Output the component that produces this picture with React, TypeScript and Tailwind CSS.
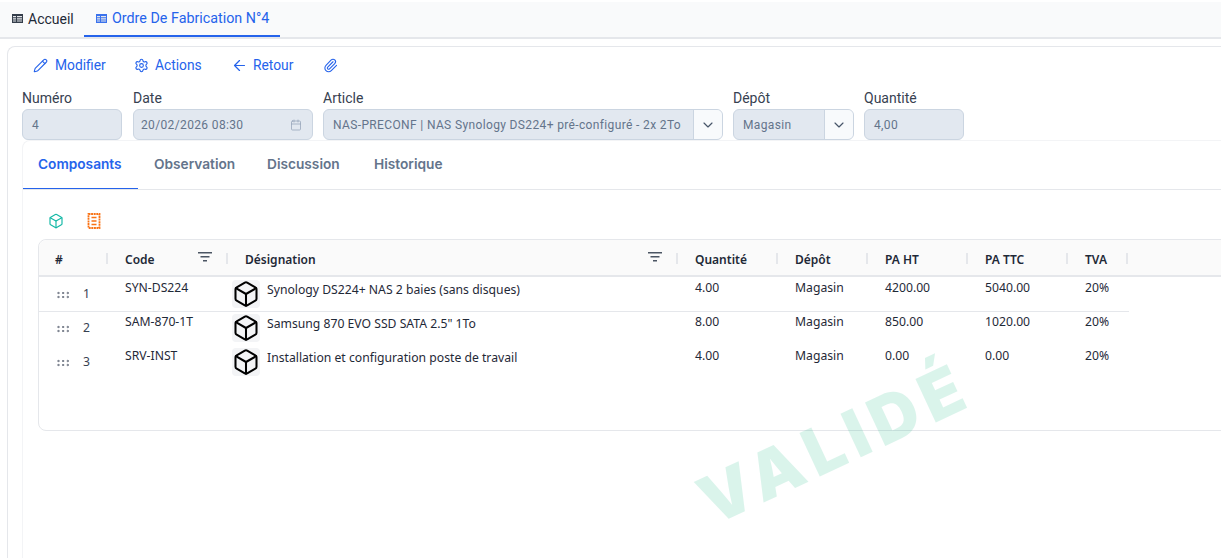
import { ArrowLeft, Box, Calendar, ChevronDown, GripHorizontal, Paperclip, Pencil, Settings } from "lucide-react";

const rows = [
  { n: 1, code: "SYN-DS224", name: "Synology DS224+ NAS 2 baies (sans disques)", qty: "4.00", ht: "4200.00", ttc: "5040.00" },
  { n: 2, code: "SAM-870-1T", name: 'Samsung 870 EVO SSD SATA 2.5" 1To', qty: "8.00", ht: "850.00", ttc: "1020.00" },
  { n: 3, code: "SRV-INST", name: "Installation et configuration poste de travail", qty: "4.00", ht: "0.00", ttc: "0.00" },
];

const inputClass = "h-[31px] flex items-center rounded-md border border-[#cbd5e1] bg-[#e2e8f0] text-xs text-[#64748b] tracking-[0.03em]";

function TableIcon({ className }: { className: string }) {
  return (
    <svg viewBox="0 0 11 9" width="11" height="9" className={className} fill="currentColor">
      <path d="M0 0h11v9H0z" opacity="0.9" />
      <path d="M1 2h3v1.2H1zM5 2h5v1.2H5zM1 4.2h3v1.2H1zM5 4.2h5v1.2H5zM1 6.4h3v1.2H1zM5 6.4h5v1.2H5z" fill="#e5e7eb" />
    </svg>
  );
}

function FilterIcon() {
  return (
    <svg viewBox="0 0 14 10" width="14" height="10" fill="#4b5563">
      <path d="M0 0h14v1.5H0zM2.5 4h9v1.5h-9zM5 8h4v1.5H5z" />
    </svg>
  );
}

function ReceiptIcon() {
  return (
    <svg viewBox="0 0 14 16" width="14" height="16" fill="none" stroke="#f97316" strokeWidth="1.4">
      <path d="M1.5 1h11v14h-11z" strokeDasharray="2 0.6" strokeWidth="1.8" />
      <path d="M4.5 4.5h5M4.5 8h5M4.5 11.5h5" />
    </svg>
  );
}

function HeaderCell({ label, filter }: { label: string; filter?: boolean }) {
  return (
    <div className="relative flex items-center justify-between pl-[17px] pr-4 pt-1 first:pl-4">
      <span>{label}</span>
      {filter && <span className="mb-1.5"><FilterIcon /></span>}
      <span className="absolute right-0 top-[13px] h-[11px] w-0.5 bg-[#e5e7eb]" />
    </div>
  );
}

function Field({ label, width, children }: { label: string; width: string; children: React.ReactNode }) {
  return (
    <div className={width}>
      <div className="h-[23px] pt-px text-sm leading-[23px] text-[#374151]">{label}</div>
      {children}
    </div>
  );
}

function SelectField({ value, padding }: { value: string; padding: string }) {
  return (
    <div className={`${inputClass} overflow-hidden`}>
      <span className={`flex-1 truncate ${padding}`}>{value}</span>
      <span className="flex h-full w-[29px] items-center justify-center border-l border-[#cbd5e1] bg-[#f8fafc] text-[#475569]">
        <ChevronDown size={16} strokeWidth={1.75} />
      </span>
    </div>
  );
}

export default function App() {
  return (
    <div className="relative flex h-[558px] w-[1221px] flex-col overflow-hidden bg-white text-[#1f2937]" style={{ fontFamily: "Roboto, sans-serif" }}>
      {/* Onglets du haut */}
      <div className="mt-0.5 flex h-[37px] items-end border-b-2 border-[#e5e7eb] bg-[#f9fafb] pl-3">
        <div className="flex h-[35px] w-[72px] items-center gap-[5px] pb-0.5 text-sm text-[#1f2937]">
          <TableIcon className="text-[#1f2937]" />
          Accueil
        </div>
        <div className="flex h-[35px] w-[196px] items-center gap-[5px] border-b-2 border-[#2563eb] pl-3 text-[14.3px] text-[#2563eb]">
          <TableIcon className="text-[#2563eb]" />
          Ordre De Fabrication N°4
        </div>
      </div>

      {/* Fiche */}
      <div className="ml-[7px] mt-[7px] flex-1 rounded-tl-lg border-l border-t border-[#e5e7eb] pl-[14px]">
        <div className="flex h-[36px] items-center pl-[11px] text-[13.8px] text-[#2563eb]">
          <span className="flex w-[101px] items-center gap-[7px]"><Pencil size={15} strokeWidth={1.75} />Modifier</span>
          <span className="flex w-[97px] items-center gap-1.5"><Settings size={15} strokeWidth={1.75} />Actions</span>
          <span className="flex w-[92px] items-center gap-[5px]"><ArrowLeft size={17} strokeWidth={1.75} />Retour</span>
          <Paperclip size={15} strokeWidth={1.75} />
        </div>

        <div className="flex gap-[10px] pt-[3px]">
          <Field label="Numéro" width="w-[100px]">
            <div className={`${inputClass} pl-[9px]`}>4</div>
          </Field>
          <Field label="Date" width="ml-px w-[180px]">
            <div className={`${inputClass} justify-between pl-[7px] pr-[10px]`}>
              20/02/2026 08:30
              <Calendar size={12} strokeWidth={1.5} className="text-[#94a3b8]" />
            </div>
          </Field>
          <Field label="Article" width="w-[400px]">
            <SelectField value="NAS-PRECONF | NAS Synology DS224+ pré-configuré - 2x 2To" padding="pl-[9px]" />
          </Field>
          <Field label="Dépôt" width="w-[121px]">
            <SelectField value="Magasin" padding="pl-[9px]" />
          </Field>
          <Field label="Quantité" width="w-[100px]">
            <div className={`${inputClass} pl-[9px]`}>4,00</div>
          </Field>
        </div>

        {/* Panneau des onglets */}
        <div className="h-[418px] rounded-tl-lg border-l border-t border-[#f3f4f6]">
          <div className="flex h-[49px] border-b border-[#e5e7eb] text-[13.7px] font-semibold text-[#64748b]" style={{ fontFamily: "Inter, sans-serif" }}>
            <div className="flex w-[115px] items-center border-b border-[#2563eb] pl-[15px] text-[#2563eb]">Composants</div>
            <div className="flex w-[113px] items-center pb-0.5 pl-4">Observation</div>
            <div className="flex w-[107px] items-center pb-0.5 pl-4">Discussion</div>
            <div className="flex items-center pb-0.5 pl-4">Historique</div>
          </div>

          <div className="flex h-[49px] items-start gap-[23px] pl-[25px] pt-[23px]">
            <Box size={16} strokeWidth={1.75} className="text-[#14b8a6]" />
            <ReceiptIcon />
          </div>

          {/* Tableau */}
          <div className="ml-[15px] h-[192px] w-[1300px] rounded-lg border border-[#e5e7eb] text-[12.2px]" style={{ fontFamily: '"Noto Sans", sans-serif' }}>
            <div className="h-[37px] rounded-t-lg border-b-2 border-[#e5e7eb] bg-[#fafafa] text-xs font-semibold text-[#1f2937]">
              <div className="grid h-full w-[1089px] grid-cols-[69px_120px_450px_100px_90px_100px_100px_60px]">
                <HeaderCell label="#" />
                <HeaderCell label="Code" filter />
                <HeaderCell label="Désignation" filter />
                <HeaderCell label="Quantité" />
                <HeaderCell label="Dépôt" />
                <HeaderCell label="PA HT" />
                <HeaderCell label="PA TTC" />
                <HeaderCell label="TVA" />
              </div>
            </div>
            {rows.map((r) => (
              <div
                key={r.n}
                className={`grid h-[34px] w-[1090px] grid-cols-[69px_120px_450px_100px_90px_100px_100px_60px] ${r.n === 1 ? "shadow-[0_1px_0_#e5e7eb]" : ""}`}
              >
                <div className="flex items-center gap-[12px] pl-4 pt-[1px] text-[#374151]">
                  <GripHorizontal size={16} strokeWidth={1.5} className="text-[#6b7280]" />
                  {r.n}
                </div>
                <div className="pl-[17px] pt-0.5">{r.code}</div>
                <div className="flex items-start gap-[7px] pl-1 pt-[3px]">
                  <span className="flex h-7 w-7 shrink-0 items-center justify-center rounded bg-[#f3f4f6] text-black">
                    <Box size={28} strokeWidth={1.75} />
                  </span>
                  <span className="pt-px">{r.name}</span>
                </div>
                <div className="pl-[17px] pt-0.5">{r.qty}</div>
                <div className="pl-[17px] pt-0.5">Magasin</div>
                <div className="pl-[17px] pt-0.5">{r.ht}</div>
                <div className="pl-[17px] pt-0.5">{r.ttc}</div>
                <div className="pl-[17px] pt-0.5">20%</div>
              </div>
            ))}
          </div>
        </div>
      </div>

      {/* Filigrane */}
      <div
        className="pointer-events-none absolute left-[689px] top-[410px] -rotate-[25deg] text-[66px] font-black leading-none tracking-[0.12em] text-[#10b981] opacity-15"
        style={{ fontFamily: "Inter, sans-serif" }}
      >
        VALIDÉ
      </div>
    </div>
  );
}
